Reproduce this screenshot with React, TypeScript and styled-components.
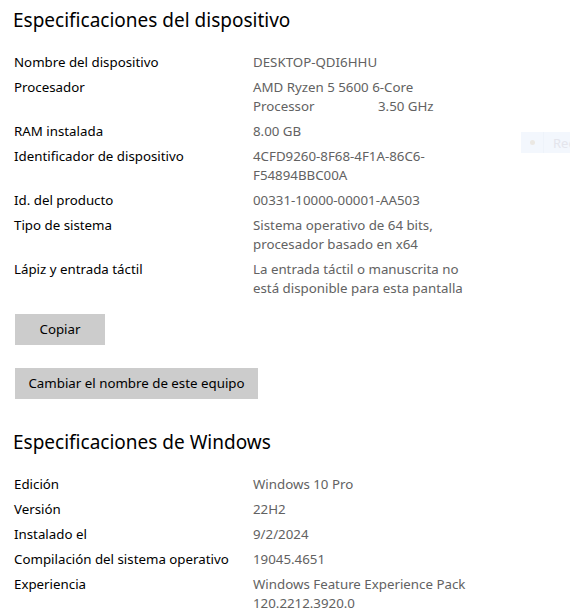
import React from 'react';
import styled, { createGlobalStyle } from 'styled-components';

const GlobalStyle = createGlobalStyle`
  html, body {
    margin: 0;
    padding: 0;
    background: #ffffff;
  }
  body {
    font-family: 'Noto Sans', 'Open Sans', sans-serif;
    color: #000000;
    -webkit-font-smoothing: antialiased;
  }
`;

const StyledPage = styled.div`
  position: relative;
  width: 570px;
  height: 612px;
  overflow: hidden;
  padding: 6px 0 0 14px;
  box-sizing: border-box;
`;

const StyledHeading = styled.h2`
  margin: 0 0 19px -1px;
  font-size: 19px;
  line-height: 28px;
  font-weight: 400;
  color: #000000;
`;

const StyledSpecList = styled.div`
  display: flex;
  flex-direction: column;
  gap: 6px;
`;

const StyledSpecRow = styled.div`
  display: grid;
  grid-template-columns: 239px 1fr;
  font-size: 13.3px;
  line-height: 19px;
`;

const StyledLabel = styled.div`
  color: #000000;
`;

const StyledValue = styled.div`
  color: #626262;
  display: flex;
  flex-direction: column;
`;

const StyledSplitLine = styled.div`
  display: flex;
`;

const StyledSplitPart = styled.span<{ $width: number }>`
  width: ${({ $width }) => $width}px;
`;

const StyledButtons = styled.div`
  display: flex;
  flex-direction: column;
  align-items: flex-start;
  gap: 23px;
  margin: 16px 0 29px 1px;
`;

const StyledButton = styled.button<{ $width: number }>`
  width: ${({ $width }) => $width}px;
  height: 31px;
  padding: 0;
  border: none;
  background: #cccccc;
  color: #000000;
  font-family: 'Noto Sans', 'Open Sans', sans-serif;
  font-size: 13.3px;
  line-height: 19px;
  text-align: center;
  cursor: default;
`;

const StyledGhost = styled.div`
  position: absolute;
  left: 521px;
  top: 132px;
  width: 49px;
  height: 21px;
  display: flex;
  align-items: center;
  background: #f3f7fd;
  font-size: 13px;
  color: #e4e5ec;
  white-space: nowrap;
  overflow: hidden;
`;

const StyledGhostDot = styled.span`
  flex: none;
  width: 22px;
  height: 100%;
  display: flex;
  align-items: center;
  justify-content: center;
  border-right: 1px solid #eef3fa;
  &::before {
    content: '';
    width: 5px;
    height: 5px;
    border-radius: 50%;
    background: #ebe8e3;
  }
`;

const StyledGhostText = styled.span`
  padding-left: 9px;
`;

type Line = string | [string, string];

interface Spec {
  label: string;
  lines: Line[];
}

const deviceSpecs: Spec[] = [
  { label: 'Nombre del dispositivo', lines: ['DESKTOP-QDI6HHU'] },
  { label: 'Procesador', lines: ['AMD Ryzen 5 5600 6-Core', ['Processor', '3.50 GHz']] },
  { label: 'RAM instalada', lines: ['8.00 GB'] },
  { label: 'Identificador de dispositivo', lines: ['4CFD9260-8F68-4F1A-86C6-', 'F54894BBC00A'] },
  { label: 'Id. del producto', lines: ['00331-10000-00001-AA503'] },
  { label: 'Tipo de sistema', lines: ['Sistema operativo de 64 bits,', 'procesador basado en x64'] },
  { label: 'Lápiz y entrada táctil', lines: ['La entrada táctil o manuscrita no', 'está disponible para esta pantalla'] },
];

const windowsSpecs: Spec[] = [
  { label: 'Edición', lines: ['Windows 10 Pro'] },
  { label: 'Versión', lines: ['22H2'] },
  { label: 'Instalado el', lines: ['9/2/2024'] },
  { label: 'Compilación del sistema operativo', lines: ['19045.4651'] },
  { label: 'Experiencia', lines: ['Windows Feature Experience Pack', '120.2212.3920.0'] },
];

const SpecList = ({ specs }: { specs: Spec[] }) => (
  <StyledSpecList>
    {specs.map((spec) => (
      <StyledSpecRow key={spec.label}>
        <StyledLabel>{spec.label}</StyledLabel>
        <StyledValue>
          {spec.lines.map((line, i) =>
            typeof line === 'string' ? (
              <div key={i}>{line}</div>
            ) : (
              <StyledSplitLine key={i}>
                <StyledSplitPart $width={125}>{line[0]}</StyledSplitPart>
                <span>{line[1]}</span>
              </StyledSplitLine>
            )
          )}
        </StyledValue>
      </StyledSpecRow>
    ))}
  </StyledSpecList>
);

const App = () => {
  return (
    <>
      <GlobalStyle />
      <StyledPage>
        <StyledHeading>Especificaciones del dispositivo</StyledHeading>
        <SpecList specs={deviceSpecs} />
        <StyledButtons>
          <StyledButton $width={90}>Copiar</StyledButton>
          <StyledButton $width={243}>Cambiar el nombre de este equipo</StyledButton>
        </StyledButtons>
        <StyledHeading>Especificaciones de Windows</StyledHeading>
        <SpecList specs={windowsSpecs} />
        <StyledGhost>
          <StyledGhostDot />
          <StyledGhostText>Rec</StyledGhostText>
        </StyledGhost>
      </StyledPage>
    </>
  );
};

export default App;
